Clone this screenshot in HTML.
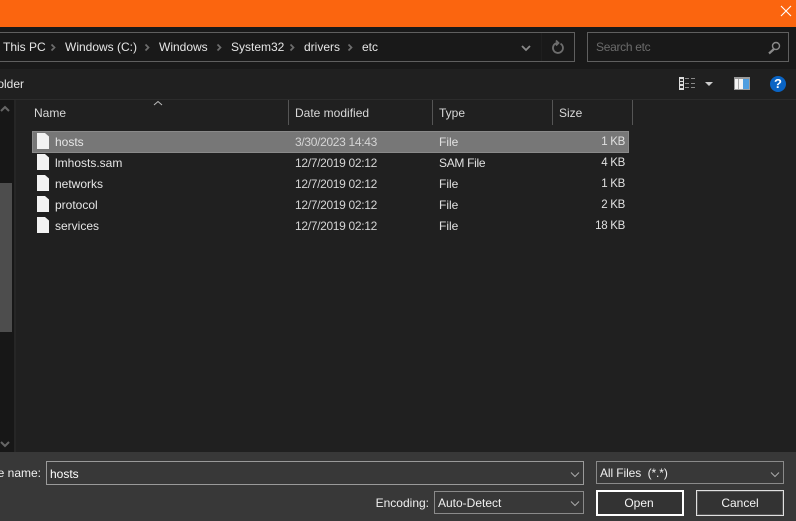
<!DOCTYPE html>
<html><head><meta charset="utf-8"><style>
*{box-sizing:border-box}
html,body{margin:0;padding:0;width:796px;height:521px;overflow:hidden;background:#202020}
body{position:relative;font-family:"Liberation Sans",sans-serif;font-size:12px;color:#e6e6e6}
.a{position:absolute}
.t{position:absolute;white-space:nowrap;line-height:16px;height:16px}
.d{letter-spacing:-.32px;color:#d4d4d4}
.k{font-size:11.500px;letter-spacing:-.3px;color:#e0e0e0;right:171px}
svg{position:absolute;overflow:visible}
</style></head><body>
<div class="a" style="left:0;top:0;width:796px;height:27px;background:#fb650f"></div>
<svg style="left:780px;top:5px" width="12" height="12"><path d="M1 1L11 11M11 1L1 11" stroke="#fff" stroke-width="1.100" fill="none"/></svg>
<div class="a" style="left:0;top:27px;width:796px;height:42px;background:#191919"></div>
<div class="a" style="left:-3px;top:32px;width:578px;height:30px;border:1px solid #5f5f5f"></div>
<div class="a" style="left:541px;top:33px;width:1px;height:28px;background:#1f1f1f"></div>
<div class="a" style="left:587px;top:32px;width:202px;height:30px;border:1px solid #5f5f5f"></div>
<div class="t" style="left:3px;top:39px">This PC</div>
<div class="t" style="left:65px;top:39px">Windows (C:)</div>
<div class="t" style="left:159px;top:39px">Windows</div>
<div class="t" style="left:231px;top:39px">System32</div>
<div class="t" style="left:304px;top:39px">drivers</div>
<div class="t" style="left:362px;top:39px">etc</div>
<svg style="left:0;top:0" width="796" height="100" fill="none" stroke="#6e6e6e" stroke-width="1.700">
<path d="M51.500 44.500l3 3-3 3M145.500 44.500l3 3-3 3M217.500 44.500l3 3-3 3M290.500 44.500l3 3-3 3M348.500 44.500l3 3-3 3"/>
<path d="M522 46l4 4 4-4" stroke="#8a8a8a" stroke-width="1.800"/>
<path d="M557 43a5 5 0 1 0 3.500.600M556 40.500l2.500 2.500-2.500 2.500" stroke="#6e6e6e" stroke-width="1.800"/>
<path d="M774 49l-5 4.500" stroke="#8a8a8a" stroke-width="2.200"/><circle cx="776" cy="46" r="3.500" stroke="#8a8a8a" stroke-width="1.400"/>
</svg>
<div class="t" style="left:596px;top:39px;color:#6b6b6b;letter-spacing:-.3px">Search etc</div>
<div class="t" style="left:-10px;top:76px">Folder</div>
<!-- view icons -->
<div class="a" style="left:679px;top:77px;width:5px;height:13px;background:#ddd"></div>
<div class="a" style="left:680px;top:79px;width:3px;height:2px;background:#333"></div>
<div class="a" style="left:680px;top:82px;width:3px;height:2px;background:#333"></div>
<div class="a" style="left:680px;top:86px;width:3px;height:2px;background:#333"></div>
<svg style="left:0;top:0" width="796" height="100" fill="none" stroke="#8a8a8a" stroke-width="1">
<path d="M685 78.500h4M691 78.500h4M685 83.500h4M691 83.500h4M685 87.500h4M691 87.500h4"/>
<path d="M705 82h8l-4 4z" fill="#ccc" stroke="none"/>
</svg>
<div class="a" style="left:734px;top:77px;width:16px;height:13px;background:#9a9a9a"></div>
<div class="a" style="left:735px;top:79px;width:8px;height:10px;background:#f4f4f4"></div>
<div class="a" style="left:738px;top:79px;width:1px;height:10px;background:#aaa"></div>
<div class="a" style="left:743px;top:79px;width:6px;height:10px;background:#4f9ee0"></div>
<div class="a" style="left:770px;top:76px;width:16px;height:16px;border-radius:50%;background:#0a64c4"></div>
<div class="t" style="left:770px;top:76px;width:16px;text-align:center;color:#fff;font-weight:bold;font-size:13px">?</div>
<div class="a" style="left:0;top:99px;width:796px;height:1px;background:#2c2c2c"></div>
<!-- scrollbar -->
<div class="a" style="left:0;top:100px;width:14px;height:352px;background:#171717"></div>
<div class="a" style="left:14px;top:100px;width:2px;height:352px;background:#262626"></div>
<div class="a" style="left:0;top:183px;width:12px;height:149px;background:#4d4d4d"></div>
<svg style="left:0;top:0" width="796" height="460" fill="none" stroke="#666" stroke-width="2">
<path d="M1 111l4-4 4 4M1 442l4 4 4-4"/>
<path d="M154 105l4-3.500 4 3.500" stroke="#bbb" stroke-width="1"/>
</svg>
<!-- headers -->
<div class="t" style="left:34px;top:105px;color:#d8d8d8">Name</div>
<div class="t" style="left:295px;top:105px;color:#d8d8d8">Date modified</div>
<div class="t" style="left:439px;top:105px;color:#d8d8d8">Type</div>
<div class="t" style="left:559px;top:105px;color:#d8d8d8">Size</div>
<div class="a" style="left:288px;top:100px;width:1px;height:25px;background:#555"></div>
<div class="a" style="left:432px;top:100px;width:1px;height:25px;background:#555"></div>
<div class="a" style="left:552px;top:100px;width:1px;height:25px;background:#555"></div>
<div class="a" style="left:632px;top:100px;width:1px;height:25px;background:#555"></div>
<!-- selection -->
<div class="a" style="left:32px;top:131px;width:597px;height:22px;background:#777;border:1px solid #8a8a8a"></div>
<!-- file icons -->
<svg style="left:0;top:0" width="796" height="240" fill="#f2f2f2">
<path d="M37 133h8l4 3.500V149H37z"/>
<path d="M37 154h8l4 3.500V170H37z"/>
<path d="M37 175h8l4 3.500V191H37z"/>
<path d="M37 196h8l4 3.500V212H37z"/>
<path d="M37 217h8l4 3.500V233H37z"/>
</svg>
<div class="t" style="left:55px;top:134px">hosts</div>
<div class="t" style="left:55px;top:155px">lmhosts.sam</div>
<div class="t" style="left:55px;top:176px">networks</div>
<div class="t" style="left:55px;top:197px">protocol</div>
<div class="t" style="left:55px;top:218px">services</div>
<div class="t d" style="left:295px;top:134px">3/30/2023 14:43</div>
<div class="t d" style="left:295px;top:155px">12/7/2019 02:12</div>
<div class="t d" style="left:295px;top:176px">12/7/2019 02:12</div>
<div class="t d" style="left:295px;top:197px">12/7/2019 02:12</div>
<div class="t d" style="left:295px;top:218px">12/7/2019 02:12</div>
<div class="t" style="left:439px;top:134px;color:#e0e0e0">File</div>
<div class="t" style="left:439px;top:155px;color:#e0e0e0;letter-spacing:-.3px">SAM File</div>
<div class="t" style="left:439px;top:176px;color:#e0e0e0">File</div>
<div class="t" style="left:439px;top:197px;color:#e0e0e0">File</div>
<div class="t" style="left:439px;top:218px;color:#e0e0e0">File</div>
<div class="t k" style="top:134px">1 KB</div>
<div class="t k" style="top:155px">4 KB</div>
<div class="t k" style="top:176px">1 KB</div>
<div class="t k" style="top:197px">2 KB</div>
<div class="t k" style="top:218px">18 KB</div>
<!-- bottom -->
<div class="a" style="left:0;top:452px;width:796px;height:69px;background:#383838"></div>
<div class="t" style="right:755px;top:465px;color:#f0f0f0">File name:</div>
<div class="a" style="left:46px;top:461px;width:538px;height:24px;border:1px solid #9a9a9a"></div>
<div class="t" style="left:50px;top:466px;color:#fff">hosts</div>
<div class="a" style="left:596px;top:461px;width:188px;height:23px;border:1px solid #8a8a8a"></div>
<div class="t" style="left:600px;top:465px;color:#f0f0f0;letter-spacing:-.1px">All Files&nbsp; (*.*)</div>
<div class="t" style="right:367px;top:495px;color:#f0f0f0">Encoding:</div>
<div class="a" style="left:434px;top:491px;width:150px;height:23px;border:1px solid #8a8a8a"></div>
<div class="t" style="left:438px;top:495px;color:#f0f0f0">Auto-Detect</div>
<svg style="left:0;top:0" width="796" height="521" fill="none" stroke="#aaa" stroke-width="1">
<path d="M571 472.500l4 4 4-4M771 472.500l4 4 4-4M571 501.500l4 4 4-4"/>
</svg>
<div class="a" style="left:596px;top:490px;width:88px;height:26px;border:2px solid #fff;background:#333"></div>
<div class="t" style="left:595px;top:495px;width:88px;text-align:center;color:#f4f4f4">Open</div>
<div class="a" style="left:696px;top:490px;width:88px;height:26px;border:1px solid #e0e0e0;box-shadow:inset 0 0 0 1px #555;background:#333"></div>
<div class="t" style="left:696px;top:495px;width:88px;text-align:center;color:#f4f4f4">Cancel</div>
</body></html>
